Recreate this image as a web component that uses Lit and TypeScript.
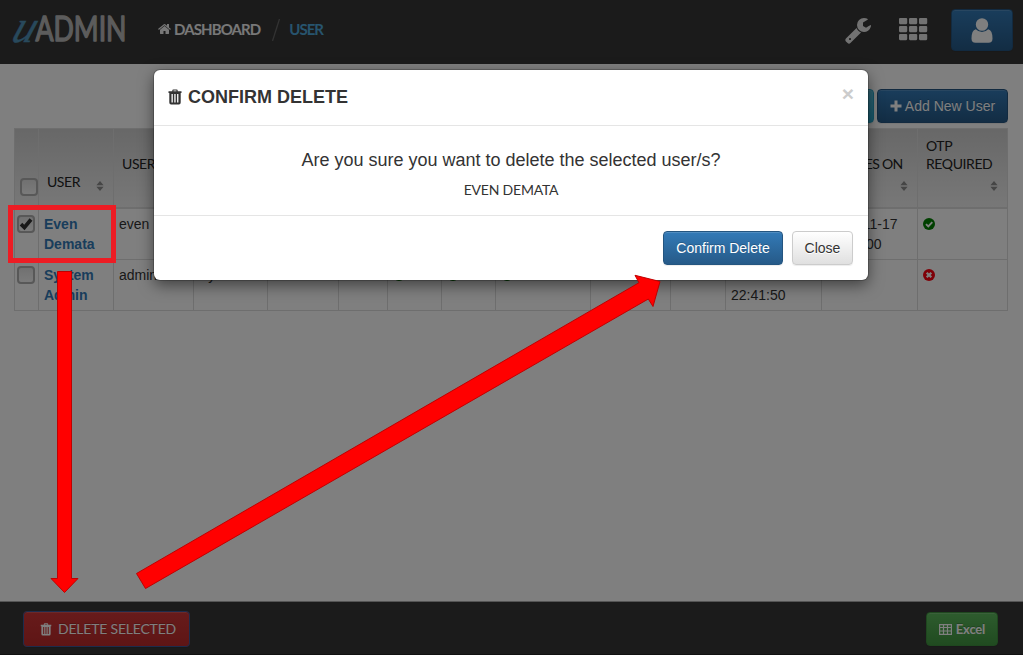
import { LitElement, html, css, svg, nothing } from "lit";
import { customElement } from "lit/decorators.js";

const HOME =
  "M1408 992v480q0 26-19 45t-45 19h-384v-384h-256v384h-384q-26 0-45-19t-19-45v-480q0-1 .5-3t.5-3l575-474 575 474q1 2 1 6zm223-69l-62 74q-8 9-21 11h-3q-13 0-21-7l-692-577-692 577q-12 8-24 7-13-2-21-11l-62-74q-8-10-7-23.5t11-21.5l719-599q32-26 76-26t76 26l244 204v-195q0-14 9-23t23-9h192q14 0 23 9t9 23v408l219 182q10 8 11 21.5t-7 23.5z";
const WRENCH =
  "M448 1472q0-26-19-45t-45-19-45 19-19 45 19 45 45 19 45-19 19-45zm644-420l-682 682q-37 37-90 37-52 0-91-37l-106-108q-38-36-38-90 0-53 38-91l681-681q39 98 114.5 173.5t173.5 114.5zm634-435q0 39-23 106-47 134-164.5 217.5t-258.5 83.5q-185 0-316.5-131.5t-131.5-316.5 131.5-316.5 316.5-131.5q58 0 121.5 16.5t107.5 46.5q16 11 16 28t-16 28l-293 169v224l193 107q5-3 79-48.5t135.5-81 70.5-35.5q15 0 23.5 10t8.5 25z";

const trash = html`<svg class="trash" viewBox="0 0 14 16">
  <path fill="currentColor" fill-rule="evenodd"
    d="M4.300 2.200V1.400Q4.300.4 5.300.4H8.700Q9.700.4 9.700 1.400V2.200H13.500V4H12.700V13.600Q12.700 15.500 10.900 15.500H3.100Q1.300 15.500 1.300 13.600V4H.5V2.200ZM5.500 2.200H8.500V1.500H5.500ZM3.500 5V13.500H4.800V5ZM6.300 5V13.500H7.600V5ZM9.100 5V13.500H10.400V5Z"/>
</svg>`;

const yes = html`<svg class="mark" viewBox="0 0 12 12"><circle cx="6" cy="6" r="6" fill="#008000"/><path d="M3 6.100l2.300 2.300 4-4.200" fill="none" stroke="#fff" stroke-width="1.900"/></svg>`;
const no = html`<svg class="mark" viewBox="0 0 12 12"><circle cx="6" cy="6" r="6" fill="#ff0010"/><path d="M3.700 3.700l4.600 4.600M8.300 3.700l-4.600 4.600" fill="none" stroke="#fff" stroke-width="2.300"/></svg>`;
const sorter = html`<svg class="sorter" viewBox="0 0 8 10"><path fill="#8c8c8c" d="M4 0L7.600 4.200H.4ZM4 10L.4 5.800H7.600Z"/></svg>`;

@customElement("app-root")
export class AppRoot extends LitElement {
  static styles = css`
    :host { display: block; position: relative; width: 1023px; height: 655px; overflow: hidden; font: 14px/20px "Liberation Sans", Arial, sans-serif; color: #333; }
    * { box-sizing: border-box; }
    svg { display: block; flex: none; }
    .page { height: 655px; display: flex; flex-direction: column; background: #fff; }
    .top { height: 64px; background: #373737; display: flex; align-items: flex-start; padding: 9px 10px 0 10px; color: #f0f0f0; }
    .logo { width: 120px; height: 40px; overflow: visible; }
    .crumbs { display: flex; align-items: center; height: 39px; margin-left: 28px; font: 700 15px/20px Lato, sans-serif; letter-spacing: -.9px; flex: 1; }
    .home { width: 14px; height: 14px; margin-right: 2px; }
    .slash { width: 8px; height: 22px; margin: 2px 9px 0 12px; }
    .here { color: #4fa9dc; letter-spacing: -1px; }
    .tools { display: flex; align-items: flex-start; }
    .wrench { width: 28px; height: 28px; margin: 7px 27px 0 -1px; }
    .grid { width: 29px; height: 23px; margin: 9px 23px 0 0; }
    .btn { display: flex; align-items: center; justify-content: center; height: 34px; border: 1px solid; border-radius: 4px; font-size: 14px; line-height: 20px; box-shadow: inset 0 1px 0 rgba(255,255,255,.15), 0 1px 1px rgba(0,0,0,.075); white-space: nowrap; text-shadow: 0 -1px 0 rgba(0,0,0,.2); color: #fff; }
    .blue { background: linear-gradient(#337ab7, #265a88); border-color: #245580; }
    .teal { background: linear-gradient(#5bc0de, #2aabd2); border-color: #28a4c9; width: 100px; }
    .red { background: linear-gradient(#cf3636, #bd2b2b); border-color: #b92c28; }
    .green { background: linear-gradient(#5cb85c, #419641); border-color: #3e8f3e; }
    .user { width: 62px; height: 42px; }
    .user svg { width: 22px; height: 25px; }
    .main { flex: 1; padding: 25px 15px 0 14px; }
    .actions { display: flex; justify-content: flex-end; gap: 3px; height: 39px; }
    .add { width: 131px; font-size: 14px; gap: 3px; }
    .add svg { width: 12px; height: 12px; }
    .table { display: grid; grid-template-columns: 24px 75px 80px 74px 71px 49px 54px 54px 95px 80px 55px 96px 96px 91px; grid-template-rows: 81px 51px 51px; width: 994px; }
    .th { background: linear-gradient(#d0d0d0, #f0f0f0); border: solid #ddd; border-width: 1px 0 2px 1px; padding: 8px 8px 0; font: 14px/18px Lato, sans-serif; display: flex; flex-direction: column; color: #222; min-width: 0; white-space: nowrap; letter-spacing: -.4px; }
    .th.two { padding-top: 26px; }
    .th.low { padding-top: 44px; letter-spacing: -.45px; }
    .td { border: solid #ddd; border-width: 0 0 1px 1px; padding: 5px 0 0 5px; min-width: 0; white-space: nowrap; }
    .last { border-right-width: 1px; }
    .foot-row { align-self: flex-end; margin: auto 1px 16px 0; }
    .wide { letter-spacing: -.7px; }
    .sorter { width: 8px; height: 10px; }
    .low .line { display: flex; justify-content: space-between; }
    .low .sorter { margin: 8px 1px 0 0; }
    .link { color: #337ab7; font-weight: 700; }
    .mark { width: 12px; height: 12px; margin-top: 4px; }
    .box { width: 18px; height: 18px; border: 2px solid #b0b0b0; border-radius: 4px; background: linear-gradient(#e2e2e2, #f6f6f6); display: block; }
    .box svg { width: 14px; height: 14px; }
    .pick { padding: 6px 0 0 2px; }
    .th.all { padding: 49px 0 0 5px; }
    .bottom { height: 54px; background: #373737; border-top: 1px solid #aaa; display: flex; justify-content: space-between; align-items: flex-start; padding: 9px 25px 0 23px; border-bottom: 1px solid #222; }
    .del { width: 167px; height: 36px; outline: 1px solid #3b5998; outline-offset: -1px; font-family: Lato, sans-serif; font-size: 14px; gap: 6px; letter-spacing: -.2px; padding-left: 3px; }
    .del .trash { width: 12px; height: 13px; }
    .xls { width: 72px; margin-top: 1px; font: 700 13px/20px Lato, sans-serif; gap: 4px; letter-spacing: -.2px; }
    .xls svg { width: 13px; height: 11px; }
    .shade { position: absolute; inset: 0; background: rgba(0,0,0,.5); }
    .modal { position: absolute; left: 154px; top: 70px; width: 714px; height: 210px; background: #fff; border-radius: 6px; box-shadow: 0 0 0 1px rgba(0,0,0,.2), 0 5px 15px rgba(0,0,0,.5); }
    .mhead { height: 56px; border-bottom: 1px solid #e5e5e5; display: flex; align-items: center; padding: 0 14px 1px; font-size: 18px; font-weight: 700; }
    .mhead .trash { width: 14px; height: 16px; margin-right: 6px; }
    .x { margin-left: auto; font-size: 21px; color: #ccc; margin-top: -7px; }
    .mbody { height: 90px; border-bottom: 1px solid #e5e5e5; text-align: center; padding-top: 24px; }
    .ask { font-size: 18px; line-height: 20px; }
    .who { font: 14px/20px Lato, sans-serif; margin-top: 10px; letter-spacing: -.2px; }
    .mfoot { display: flex; justify-content: flex-end; gap: 9px; padding: 15px; }
    .ok { width: 120px; }
    .close { width: 61px; color: #333; text-shadow: 0 1px 0 #fff; background: linear-gradient(#fff, #e0e0e0); border-color: #ccc; }
    .notes { position: absolute; left: 0; top: 0; width: 1023px; height: 655px; }
  `;

  private box(on = false) {
    return html`<span class="box">${on ? html`<svg viewBox="0 0 14 14"><path d="M2 7.200L5.400 10.500L12 2.500" fill="none" stroke="#333" stroke-width="3.700"/></svg>` : nothing}</span>`;
  }

  private row(on: boolean, name: string[], login: string, first: string, flags: boolean, login_at: string[], expires: string[], otp: boolean) {
    const f = flags ? yes : nothing;
    return html`
      <div class="td pick">${this.box(on)}</div>
      <div class="td link">${name[0]}<br>${name[1]}</div>
      <div class="td">${login}</div>
      <div class="td">${first}</div>
      <div class="td"></div><div class="td"></div>
      <div class="td">${f}</div><div class="td">${f}</div><div class="td">${f}</div>
      <div class="td"></div><div class="td"></div>
      <div class="td">${login_at[0]}<br>${login_at[1]}</div>
      <div class="td">${expires[0]}<br>${expires[1]}</div>
      <div class="td last">${otp ? yes : no}</div>`;
  }

  render() {
    return html`
      <div class="page">
        <header class="top">
          <svg class="logo" viewBox="0 0 120 40">
            <text x="1" y="33" font-family="Liberation Serif, serif" font-style="italic" font-weight="400" font-size="46" textLength="22" lengthAdjust="spacingAndGlyphs" fill="#5092b8" stroke="#5092b8" stroke-width=".4" transform="skewX(-20) translate(11 0)">u</text>
            <text x="25.500" y="31.500" font-family="Lato, sans-serif" font-weight="400" font-size="35" textLength="91" lengthAdjust="spacingAndGlyphs" fill="#b8b8b8" stroke="#b8b8b8" stroke-width="1.500" stroke-linejoin="round">ADMIN</text>
          </svg>
          <nav class="crumbs">
            <svg class="home" viewBox="0 0 1792 1792"><path fill="currentColor" d=${HOME}></path></svg>
            <span>DASHBOARD</span>
            <svg class="slash" viewBox="0 0 8 22"><path d="M7.500 0L.5 22" stroke="#666" stroke-width="1.300"/></svg>
            <span class="here">USER</span>
          </nav>
          <div class="tools">
            <svg class="wrench" viewBox="0 0 1792 1792"><path fill="#e4e4e4" d=${WRENCH}></path></svg>
            <svg class="grid" viewBox="0 0 29 23">
              ${[0, 8, 16].map((y) => [0, 10, 20].map((x) => svg`<rect x=${x} y=${y} width="8.200" height="6.200" rx="1.100" fill="#e4e4e4"/>`))}
            </svg>
            <div class="btn blue user">
              <svg viewBox="0 0 22 25"><path fill="#fff" d="M4.800 6.500a6.200 6.300 0 1 1 12.400 0a6.200 6.300 0 1 1-12.400 0ZM4.800 11.200Q7.500 14 11 14T17.200 11.200Q21.500 12.300 21.500 20.500Q21.500 24.800 17.500 24.800H4.500Q.5 24.800 .5 20.500Q.5 12.300 4.800 11.200Z"/></svg>
            </div>
          </div>
        </header>
        <main class="main">
          <div class="actions">
            <div class="btn teal"></div>
            <div class="btn blue add"><svg viewBox="0 0 12 12"><path fill="#fff" d="M4.500.5h3v4h4v3h-4v4h-3v-4h-4v-3h4z"/></svg><span>Add New User</span></div>
          </div>
          <section class="table">
            <div class="th all">${this.box()}</div>
            <div class="th low"><div class="line"><span>USER</span>${sorter}</div></div>
            <div class="th two">USERNAME</div>
            ${Array.from({ length: 9 }, () => html`<div class="th"></div>`)}
            <div class="th two"><span class="wide">EXPIRES ON</span><span class="foot-row">${sorter}</span></div>
            <div class="th last"><span>OTP</span><span>REQUIRED</span><span class="foot-row">${sorter}</span></div>
            ${this.row(true, ["Even", "Demata"], "even", "Even", false, ["", ""], ["2018-11-17", "08:00:00"], true)}
            ${this.row(false, ["System", "Admin"], "admin", "System", true, ["2018-11-10", "22:41:50"], ["", ""], false)}
          </section>
        </main>
        <footer class="bottom">
          <div class="btn red del">${trash}<span>DELETE SELECTED</span></div>
          <div class="btn green xls"><svg viewBox="0 0 13 11"><path d="M.6.6H12.400V10.400H.6ZM.6 3.500H12.400M.6 7H12.400M4.500.6V10.400M8.500.6V10.400" fill="none" stroke="#fff" stroke-width="1.200"/></svg><span>Excel</span></div>
        </footer>
      </div>
      <div class="shade"></div>
      <section class="modal">
        <div class="mhead">${trash}<span>CONFIRM DELETE</span><span class="x">×</span></div>
        <div class="mbody"><div class="ask">Are you sure you want to delete the selected user/s?</div><div class="who">EVEN DEMATA</div></div>
        <div class="mfoot"><div class="btn blue ok">Confirm Delete</div><div class="btn close">Close</div></div>
      </section>
      <svg class="notes" viewBox="0 0 1023 655">
        <rect x="10.500" y="207.500" width="103" height="53" fill="none" stroke="#ed1c24" stroke-width="5"/>
        <g fill="#f00" stroke="#c00000" stroke-width="1">
          <path d="M57.500 271.500H71.500V578.500H78L64.500 592.500L51 578.500H57.500Z"/>
          <path d="M136.500 573.500L639 282.700L635 275.300L660 281.500L653 306.500L648.300 299L145.500 588.500Z"/>
        </g>
      </svg>`;
  }
}
